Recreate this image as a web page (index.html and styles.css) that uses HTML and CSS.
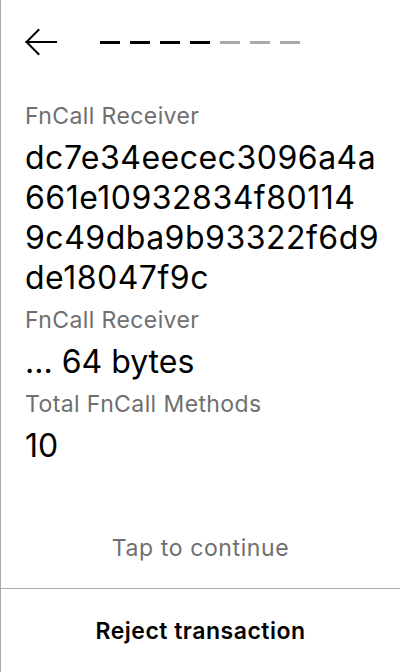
FILE: index.html
```html
<!DOCTYPE html>
<html>
<head>
<meta charset="utf-8">
<link rel="stylesheet" href="styles.css">
</head>
<body>
<div class="screen">
  <header class="header">
    <svg class="back" width="32" height="28" viewBox="0 0 32 28" fill="none" stroke="#000" stroke-width="2" stroke-linecap="square">
      <path d="M1.5 14 H31"/>
      <path d="M13.5 2 L1.5 14 L13.5 26"/>
    </svg>
    <div class="steps">
      <span class="step done"></span>
      <span class="step done"></span>
      <span class="step done"></span>
      <span class="step done"></span>
      <span class="step"></span>
      <span class="step"></span>
      <span class="step"></span>
    </div>
  </header>
  <main class="content">
    <div class="label">FnCall Receiver</div>
    <div class="value hash">dc7e34eecec3096a4a<br>661e10932834f80114<br>9c49dba9b93322f6d9<br>de18047f9c</div>
    <div class="label">FnCall Receiver</div>
    <div class="value">... 64 bytes</div>
    <div class="label">Total FnCall Methods</div>
    <div class="value">10</div>
  </main>
  <div class="tap">Tap to continue</div>
  <footer class="footer">Reject transaction</footer>
</div>
</body>
</html>
```

FILE: styles.css
```css
* { box-sizing: border-box; }
html, body { margin: 0; padding: 0; background: #fff; }
body { font-family: Inter, "Noto Sans", sans-serif; color: #000; }
.screen {
  width: 400px;
  height: 672px;
  border-left: 1px solid #aaaaaa;
  display: flex;
  flex-direction: column;
}
.header {
  height: 84px;
  display: flex;
  align-items: center;
  padding-left: 24px;
}
.back { display: block; }
.steps {
  display: flex;
  gap: 10px;
  margin-left: 43px;
}
.step {
  width: 20px;
  height: 3px;
  background: #aaaaaa;
}
.step.done { background: #000; }
.content {
  padding: 18px 16px 0 24px;
  display: flex;
  flex-direction: column;
  gap: 8px;
  flex: 1;
}
.label {
  font-size: 23px;
  line-height: 28px;
  letter-spacing: 0.4px;
  color: #6f6f6f;
}
.value {
  font-size: 32px;
  line-height: 40px;
}
.hash {
  word-break: break-all;
  letter-spacing: 0.5px;
}
.tap {
  text-align: center;
  font-size: 23px;
  line-height: 28px;
  letter-spacing: 0.6px;
  color: #6f6f6f;
  padding-bottom: 26px;
}
.footer {
  height: 84px;
  border-top: 1px solid #aaaaaa;
  display: flex;
  align-items: center;
  justify-content: center;
  font-size: 23px;
  font-weight: 600;
  letter-spacing: 0.5px;
}
```
